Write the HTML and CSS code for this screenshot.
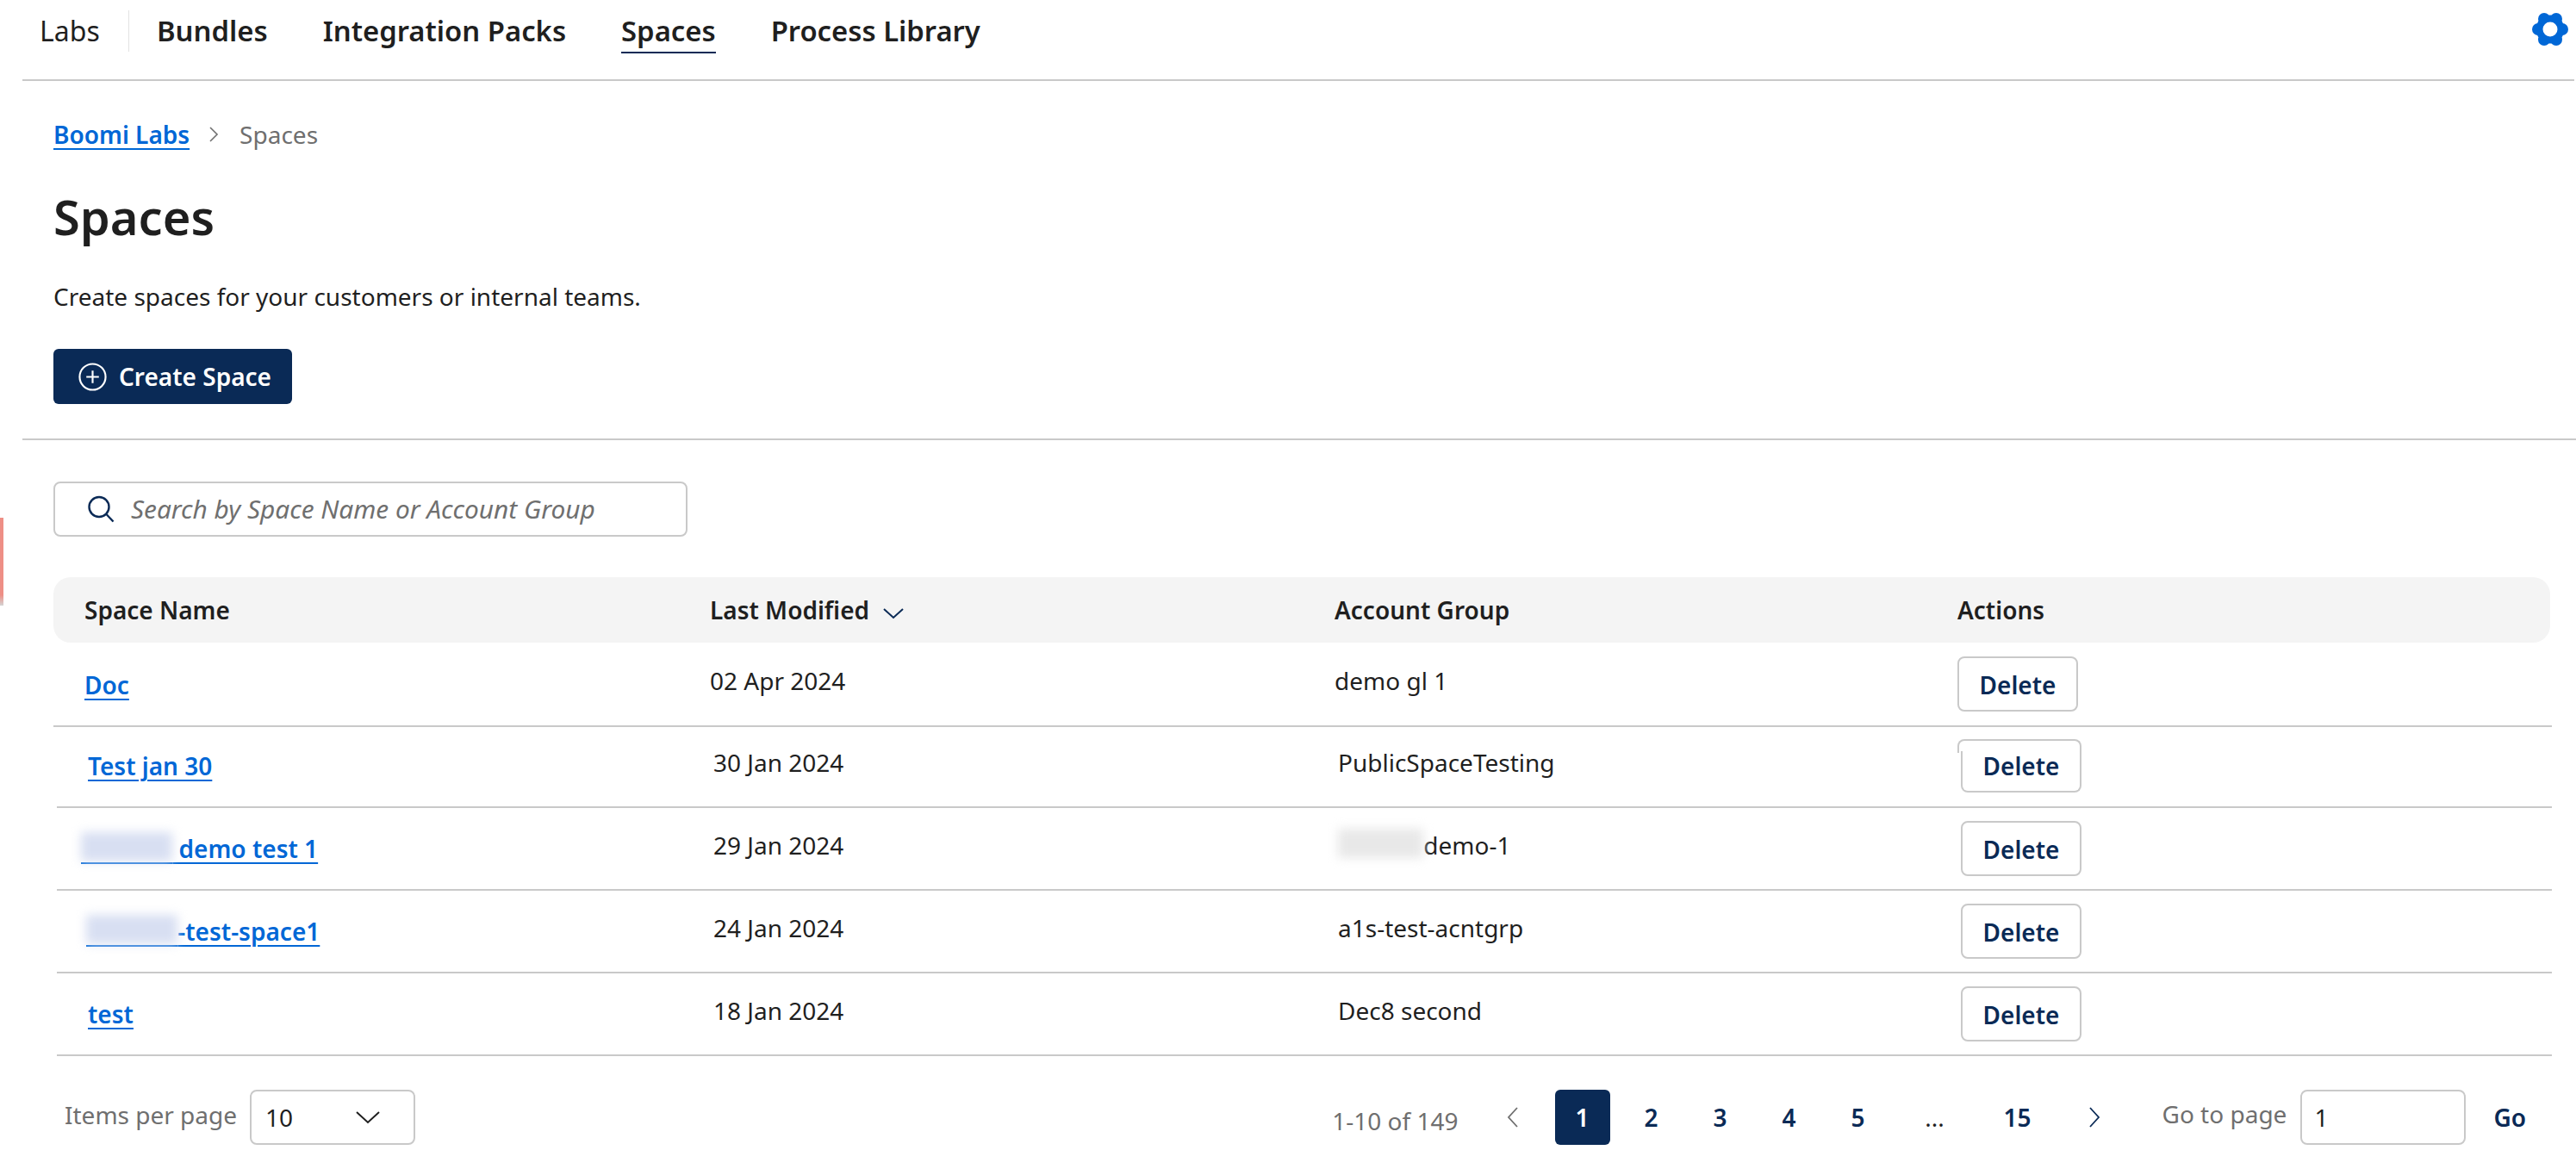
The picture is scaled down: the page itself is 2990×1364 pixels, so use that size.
FILE: index.html
```html
<!DOCTYPE html>
<html lang="en">
<head>
  <meta charset="UTF-8">
  <title>Spaces</title>
  <link rel="stylesheet" href="styles.css">
</head>
<body>
  <div class="edge-mark"></div>

  <header class="topbar">
    <span class="brand">Labs</span>
    <nav class="nav">
      <a href="#">Bundles</a>
      <a href="#">Integration Packs</a>
      <a href="#" class="active">Spaces</a>
      <a href="#">Process Library</a>
    </nav>
    <svg class="gear" viewBox="0 0 44 40">
      <g fill="#0067d6">
        <circle cx="22" cy="20" r="16.5"/>
        <circle cx="36" cy="20" r="7"/>
        <circle cx="29" cy="32.1" r="7"/>
        <circle cx="15" cy="32.1" r="7"/>
        <circle cx="8" cy="20" r="7"/>
        <circle cx="15" cy="7.9" r="7"/>
        <circle cx="29" cy="7.9" r="7"/>
      </g>
      <circle cx="22" cy="20" r="8.5" fill="#fff"/>
    </svg>
  </header>

  <section class="page-head">
    <div class="crumbs">
      <a href="#" class="link-plain">Boomi Labs</a>
      <svg class="crumb-sep" viewBox="0 0 12 20"><path d="M2 2l8 8-8 8" fill="none" stroke="#6f6f6f" stroke-width="1.6"/></svg>
      <span>Spaces</span>
    </div>
    <h1>Spaces</h1>
    <p>Create spaces for your customers or internal teams.</p>
    <button class="btn-create">
      <svg viewBox="0 0 34 34"><circle cx="17" cy="17" r="15.5" fill="none" stroke="#fff" stroke-width="2.2"/><path d="M17 9.5v15M9.5 17h15" stroke="#fff" stroke-width="2.2"/></svg>
      Create Space
    </button>
  </section>

  <main class="content">
    <div class="search">
      <svg viewBox="0 0 32 32"><circle cx="14" cy="13.5" r="11.5" fill="none" stroke="#0a2a56" stroke-width="2.4"/><path d="M22.5 22l8 8.5" stroke="#0a2a56" stroke-width="2.4"/></svg>
      <span>Search by Space Name or Account Group</span>
    </div>

    <div class="table">
      <div class="row head">
        <div>Space Name</div>
        <div>Last Modified <svg class="sort" viewBox="0 0 26 14"><path d="M2 2l11 10L24 2" fill="none" stroke="#0a2a56" stroke-width="2"/></svg></div>
        <div>Account Group</div>
        <div>Actions</div>
      </div>

      <div class="row first">
        <div><a href="#" class="name name-low">Doc</a></div>
        <div class="cell">02 Apr 2024</div>
        <div class="cell">demo gl 1</div>
        <div><button class="btn-delete">Delete</button></div>
      </div>
      <div class="row second">
        <div><a href="#" class="name">Test jan 30</a></div>
        <div class="cell">30 Jan 2024</div>
        <div class="cell">PublicSpaceTesting</div>
        <div><button class="btn-delete split">Delete</button></div>
      </div>
      <div class="row">
        <div><a href="#" class="name"><span class="mask mask-blue wide">&nbsp;</span> demo test 1</a></div>
        <div class="cell">29 Jan 2024</div>
        <div class="cell"><span class="mask mask-grey">&nbsp;</span>demo-1</div>
        <div><button class="btn-delete">Delete</button></div>
      </div>
      <div class="row">
        <div><a href="#" class="name"><span class="mask mask-blue">&nbsp;</span>-test-space1</a></div>
        <div class="cell">24 Jan 2024</div>
        <div class="cell">a1s-test-acntgrp</div>
        <div><button class="btn-delete">Delete</button></div>
      </div>
      <div class="row">
        <div><a href="#" class="name">test</a></div>
        <div class="cell">18 Jan 2024</div>
        <div class="cell">Dec8 second</div>
        <div><button class="btn-delete">Delete</button></div>
      </div>
    </div>

    <div class="pager">
      <div class="per-page">
        <span class="muted">Items per page</span>
        <div class="select">
          <span>10</span>
          <svg viewBox="0 0 30 16"><path d="M2 2l13 12L28 2" fill="none" stroke="#1f1f1f" stroke-width="2"/></svg>
        </div>
      </div>
      <div class="pages">
        <span class="muted count">1-10 of 149</span>
        <svg class="page-arrow prev" viewBox="0 0 14 26"><path d="M12 2L2 13l10 11" fill="none" stroke="#6f6f6f" stroke-width="1.8"/></svg>
        <a href="#" class="page current">1</a>
        <a href="#" class="page">2</a>
        <a href="#" class="page">3</a>
        <a href="#" class="page">4</a>
        <a href="#" class="page">5</a>
        <span class="page dots">...</span>
        <a href="#" class="page fifteen">15</a>
        <svg class="page-arrow next" viewBox="0 0 14 26"><path d="M2 2l10 11L2 24" fill="none" stroke="#0a2a56" stroke-width="1.8"/></svg>
        <span class="muted goto">Go to page</span>
        <div class="page-input">1</div>
        <a href="#" class="go">Go</a>
      </div>
    </div>
  </main>
</body>
</html>
```

FILE: styles.css
```css
* {
  box-sizing: border-box;
}
body {
  margin: 0;
  background: #fff;
  color: #1f1f1f;
  font-family: "Noto Sans", "Open Sans", sans-serif;
  font-size: 28px;
  line-height: 40px;
}
a {
  color: inherit;
  text-decoration: none;
}
.edge-mark {
  position: absolute;
  left: 0;
  top: 601px;
  width: 4px;
  height: 102px;
  background: linear-gradient(#ee8f86 88%, #d4d4d4);
}

/* top bar */
.topbar {
  display: flex;
  align-items: flex-start;
  height: 94px;
  margin: 0 2px 0 26px;
  border-bottom: 2px solid #c9c9c9;
}
.brand {
  width: 124px;
  height: 48px;
  margin-top: 12px;
  padding: 3px 0 0 20px;
  border-right: 1px solid #e2e2e2;
  font-size: 32px;
  line-height: 42px;
}
.nav {
  display: flex;
  gap: 64px;
  margin-left: 32px;
}
.nav a {
  height: 50px;
  margin-top: 12px;
  padding-top: 3px;
  font-size: 32.8px;
  line-height: 42px;
  font-weight: 600;
}
.nav a.active {
  border-bottom: 2px solid #0a2a56;
}
.gear {
  width: 44px;
  height: 40px;
  margin: 14px 6px 0 auto;
}

/* page heading */
.page-head {
  margin-left: 26px;
  padding: 42px 0 40px 36px;
  border-bottom: 2px solid #c9c9c9;
}
.crumbs {
  display: flex;
  align-items: center;
  color: #6f6f6f;
}
.crumbs .link-plain {
  color: #0067d6;
  font-weight: 600;
  text-decoration: underline;
  text-decoration-thickness: 2px;
  text-underline-offset: 5px;
}
.crumb-sep {
  width: 12px;
  height: 20px;
  margin: 0 24px 0 22px;
}
h1 {
  margin: 39px 0 0;
  font-size: 56px;
  line-height: 72px;
  font-weight: 600;
}
.page-head p {
  margin: 37px 0 0;
}
.btn-create {
  display: flex;
  align-items: center;
  gap: 14px;
  height: 64px;
  margin-top: 41px;
  padding: 0 24px 0 29px;
  border: 0;
  border-radius: 6px;
  background: #0a2a56;
  color: #fff;
  font: 600 28px/40px "Noto Sans", sans-serif;
}
.btn-create svg {
  width: 33px;
  height: 33px;
}

/* search + table */
.content {
  padding-left: 62px;
}
.search {
  display: flex;
  align-items: center;
  gap: 19px;
  width: 736px;
  height: 64px;
  margin-top: 48px;
  padding-left: 37px;
  border: 2px solid #c9c9c9;
  border-radius: 8px;
  color: #6f6f6f;
  font-size: 29.8px;
  font-style: italic;
}
.search svg {
  width: 32px;
  height: 32px;
}
.table {
  margin-top: 47px;
}
.row {
  display: grid;
  grid-template-columns: 726px 725px 723px 1fr;
  align-items: center;
  width: 2896px;
  height: 96px;
  margin-left: 4px;
  padding-left: 36px;
  border-bottom: 2px solid #c9c9c9;
}
.row.first {
  width: 2900px;
  margin-left: 0;
  height: 98px;
}
.row.second {
  height: 94px;
  padding-bottom: 2px;
}
.row.head {
  width: 2898px;
  height: 76px;
  margin-left: 0;
  border: 0;
  border-radius: 20px 20px 20px 20px;
  background: #f4f4f4;
  font-weight: 600;
}
.sort {
  width: 26px;
  height: 14px;
  margin-left: 8px;
}
.cell {
  padding-bottom: 8px;
}
.name {
  color: #0067d6;
  font-weight: 600;
  text-decoration: underline;
  text-decoration-thickness: 2px;
  text-underline-offset: 5px;
}
.name-low {
  position: relative;
  top: 1px;
}
.mask {
  position: relative;
  display: inline;
}
.mask-blue {
  margin-left: -2px;
  letter-spacing: 99px;
}
.mask-blue.wide {
  margin-left: -8px;
  letter-spacing: 99px;
}
.mask-grey {
  letter-spacing: 92px;
}
.mask::before {
  content: "";
  position: absolute;
  left: 0;
  right: 0;
  top: 0;
  height: 34px;
  filter: blur(6px);
}
.mask-blue::before {
  background: #d8dff2;
}
.mask-grey::before {
  background: #e8e8e8;
}
.btn-delete {
  position: relative;
  width: 140px;
  height: 64px;
  border: 2px solid #c9c9c9;
  border-radius: 8px;
  background: #fff;
  color: #0a2a56;
  font: 600 28px/40px "Noto Sans", sans-serif;
  padding: 2px 0 0;
}

/* row two: a seam in the capture shifts the top of this button left */
.btn-delete.split {
  height: 48px;
  margin-top: 14px;
  border-top: 0;
  border-radius: 0 0 8px 8px;
  padding: 0 0 12px;
  line-height: 34px;
}
.btn-delete.split::before {
  content: "";
  position: absolute;
  left: -6px;
  top: -14px;
  width: 140px;
  height: 14px;
  border: 2px solid #c9c9c9;
  border-bottom: 0;
  border-radius: 8px 8px 0 0;
}

/* pagination */
.pager {
  display: flex;
  align-items: center;
  justify-content: space-between;
  height: 64px;
  margin-top: 39px;
  padding: 0 58px 0 13px;
}
.muted {
  color: #6f6f6f;
}
.per-page,
.pages {
  display: flex;
  align-items: center;
}
.per-page .muted {
  margin-right: 15px;
  padding-bottom: 6px;
}
.select {
  display: flex;
  align-items: center;
  justify-content: space-between;
  width: 192px;
  height: 64px;
  padding: 0 38px 0 16px;
  border: 2px solid #c9c9c9;
  border-radius: 8px;
}
.select svg {
  width: 30px;
  height: 16px;
}
.count {
  padding-top: 7px;
}
.page-arrow {
  width: 14px;
  height: 26px;
}
.page-arrow.prev {
  margin: 0 42px 0 56px;
}
.page-arrow.next {
  margin: 0 72px 0 43px;
}
.page {
  width: 64px;
  height: 64px;
  margin-right: 16px;
  border-radius: 6px;
  color: #0a2a56;
  font-weight: 600;
  line-height: 64px;
  text-align: center;
}
.page.current {
  background: #0a2a56;
  color: #fff;
}
.page.dots {
  width: 82px;
  color: #1f1f1f;
  font-weight: 400;
}
.page.fifteen {
  width: 78px;
  margin-right: 0;
}
.goto {
  margin-right: 16px;
  padding-bottom: 8px;
}
.page-input {
  width: 192px;
  height: 64px;
  padding: 10px 0 0 14px;
  border: 2px solid #c9c9c9;
  border-radius: 8px;
}
.go {
  margin-left: 32px;
  color: #0a2a56;
  font-weight: 600;
}
```
